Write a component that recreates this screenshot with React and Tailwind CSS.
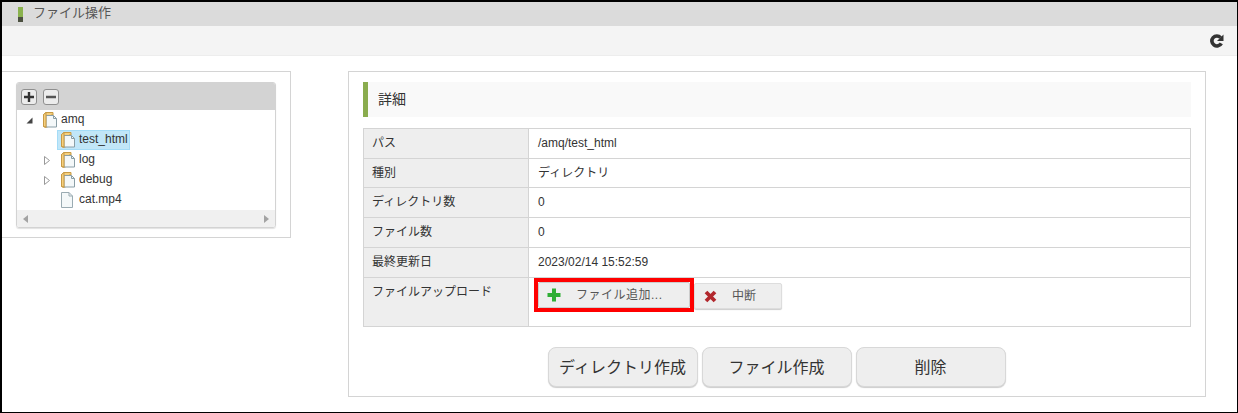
const FONT = 'font-["Liberation_Sans","Noto_Sans_CJK_JP",sans-serif]';

function FolderIcon() {
  return (
    <svg width="14" height="16" viewBox="0 0 14 16" className="shrink-0">
      <path d="M0.5 2.5 L3 0.5 L10 0.5 L10 3 L8 3 L8 13.5 L2.5 15.5 L0.5 14.5 Z" fill="#f5cf7e" stroke="#c79a45" strokeWidth="1" />
      <path d="M3 3.5 L10.5 3.5 L13.5 6.5 L13.5 15 L3 15 Z" fill="#f4f8f9" stroke="#8a9ea6" strokeWidth="1" />
      <path d="M10.5 3.5 L10.5 6.5 L13.5 6.5" fill="none" stroke="#8a9ea6" strokeWidth="1" />
      <path d="M0.5 2.5 L3 0.5 L3 15 L0.5 14.5 Z" fill="#f5cf7e" stroke="#c79a45" strokeWidth="1" />
    </svg>
  );
}

function FileIcon() {
  return (
    <svg width="14" height="16" viewBox="0 0 14 16" className="shrink-0">
      <path d="M0.5 0.5 L8 0.5 L11.5 4 L11.5 15.5 L0.5 15.5 Z" fill="#f4f8f9" stroke="#9aabb2" strokeWidth="1" />
      <path d="M8 0.5 L8 4 L11.5 4" fill="none" stroke="#9aabb2" strokeWidth="1" />
    </svg>
  );
}

function TreeRow({ arrow, selected, file, label, indent }) {
  return (
    <div className={`flex h-5 items-center ${indent ? 'pl-[23px]' : 'pl-[5px]'}`}>
      <span className="flex w-[14px] shrink-0 justify-center">
        {arrow === 'open' && (
          <svg width="7" height="7" viewBox="0 0 7 7"><path d="M0.5 6.5 L6.5 6.5 L6.5 0.5 Z" fill="#444" /></svg>
        )}
        {arrow === 'closed' && (
          <svg width="6" height="9" viewBox="0 0 6 9"><path d="M0.5 0.5 L5.5 4.5 L0.5 8.5 Z" fill="#fff" stroke="#999" /></svg>
        )}
      </span>
      <span className={`ml-[3px] flex h-5 items-center gap-1 pl-1 pr-[2px] ${selected ? 'outline outline-1 -outline-offset-1 outline-[#a5dcf7] bg-[#c1e6f8]' : ''}`}>
        {file ? <FileIcon /> : <FolderIcon />}
        <span className="pb-[2px] text-xs text-[#333]">{label}</span>
      </span>
    </div>
  );
}

function Row({ label, value, className, tall }) {
  return (
    <div className={`flex border-b border-[#d4d4d4] last:border-b-0 ${className}`}>
      <div className={`flex w-[165px] shrink-0 border-r border-[#d4d4d4] bg-[#eeeeee] pl-2 text-xs text-[#333] ${tall ? 'items-start pt-[6px]' : 'items-center pb-[1px]'}`}>
        {label}
      </div>
      <div className={`flex min-w-0 flex-1 items-center pl-[9px] text-xs text-[#333] ${tall ? '' : 'pb-[1px]'}`}>{value}</div>
    </div>
  );
}

function BigButton({ children }) {
  return (
    <button
      type="button"
      className="h-10 w-[150px] rounded-[8px] border border-[#d8d8d8] bg-[#eeeeee] pt-[1px] text-base text-[#333] shadow-[0_1px_1px_rgba(0,0,0,0.2)]"
    >
      {children}
    </button>
  );
}

function TreeToolButton({ children }) {
  return (
    <button type="button" className="flex h-4 w-4 items-center justify-center rounded-[3px] border border-[#8f8f8f] bg-[#ececec]">
      {children}
    </button>
  );
}

export default function App() {
  return (
    <div className={`h-[413px] w-[1238px] overflow-hidden border-b border-l-2 border-r border-t-2 border-black bg-white ${FONT}`}>
      <div className="flex h-6 items-center bg-[#dbdbdb] pl-4">
        <span className="flex h-[15px] w-[5px] flex-col">
          <span className="h-[10px] bg-[#8ab24e]" />
          <span className="h-[5px] bg-[#4b5040]" />
        </span>
        <span className="ml-[10px] pb-[2px] text-[13px] text-[#555]">ファイル操作</span>
      </div>

      <div className="flex h-[30px] items-center justify-end border-b border-[#ededed] bg-[#f4f4f4] pr-[13px]">
        <svg width="14" height="14" viewBox="0 0 14 14">
          <path d="M11.3 9.3 A5 5 0 1 1 10.6 3.6" fill="none" stroke="#333" strokeWidth="3.6" />
          <path d="M13.5 0.5 L13.5 7 L7 7 Z" fill="#333" />
        </svg>
      </div>

      <div className="flex items-start pt-[15px]">
        <div className="h-[167px] w-[289px] border-y border-r border-[#d4d4d4] pl-[14px] pt-[10px]">
          <div className="h-[146px] w-[260px] overflow-hidden rounded-[3px] border border-[#d3d3d3] shadow-[0_1px_1px_rgba(0,0,0,0.12)]">
            <div className="flex h-[27px] items-center gap-[6px] bg-[#d3d3d3] pl-1">
              <TreeToolButton>
                <svg width="12" height="12" viewBox="0 0 12 12"><path d="M6 1 V11 M1 6 H11" stroke="#333" strokeWidth="2.4" /></svg>
              </TreeToolButton>
              <TreeToolButton>
                <svg width="12" height="12" viewBox="0 0 12 12"><path d="M1 6 H11" stroke="#555" strokeWidth="2.4" /></svg>
              </TreeToolButton>
            </div>
            <div className="bg-white">
              <TreeRow arrow="open" label="amq" />
              <TreeRow selected indent label="test_html" />
              <TreeRow arrow="closed" indent label="log" />
              <TreeRow arrow="closed" indent label="debug" />
              <TreeRow file indent label="cat.mp4" />
            </div>
            <div className="flex h-[17px] items-center justify-between bg-[#f0f0f0] px-[6px]">
              <svg width="5" height="8" viewBox="0 0 5 8"><path d="M5 0 L0 4 L5 8 Z" fill="#a3a3a3" /></svg>
              <svg width="5" height="8" viewBox="0 0 5 8"><path d="M0 0 L5 4 L0 8 Z" fill="#a3a3a3" /></svg>
            </div>
          </div>
        </div>

        <div className="ml-[57px] h-[326px] w-[858px] border border-[#d4d4d4] px-[14px] pt-[10px]">
          <div className="flex h-[35px] w-[828px] items-center border-l-[5px] border-[#8aac4e] bg-[#f9f9f9] pb-[2px] pl-[10px] text-sm text-[#333]">
            詳細
          </div>
          <div className="mt-[11px] w-[828px] border border-[#d4d4d4]">
            <Row className="h-[30px]" label="パス" value="/amq/test_html" />
            <Row className="h-[29px]" label="種別" value="ディレクトリ" />
            <Row className="h-[30px]" label="ディレクトリ数" value="0" />
            <Row className="h-[30px]" label="ファイル数" value="0" />
            <Row className="h-[30px]" label="最終更新日" value="2023/02/14 15:52:59" />
            <Row
              tall
              className="h-[48px]"
              label="ファイルアップロード"
              value={
                <div className="-ml-1 -mt-[14px] flex items-center">
                  <div className="border-4 border-[#ff0000]">
                    <button type="button" className="flex h-[26px] w-[152px] items-center rounded-[2px] border border-[#cccccc] bg-[#eeeeee] pl-2 text-xs tracking-[0.5px] text-[#555]">
                      <svg width="14" height="14" viewBox="0 0 14 14" className="shrink-0">
                        <path d="M7 0.5 V13.5 M0.5 7 H13.5" stroke="#2fae35" strokeWidth="4" />
                      </svg>
                      <span className="ml-[15px]">ファイル追加...</span>
                    </button>
                  </div>
                  <button type="button" className="mt-[2px] flex h-[26px] w-[88px] items-center rounded-[2px] border border-[#dddddd] bg-[#eeeeee] pl-[9px] text-xs text-[#555] shadow-[0_1px_1px_rgba(0,0,0,0.2)]">
                    <svg width="13" height="13" viewBox="0 0 13 13" className="shrink-0">
                      <path d="M2 2 L11 11 M11 2 L2 11" stroke="#b2282d" strokeWidth="3.8" />
                    </svg>
                    <span className="ml-[15px]">中断</span>
                  </button>
                </div>
              }
            />
          </div>
          <div className="mt-5 flex justify-center gap-1 pr-[1px]">
            <BigButton>ディレクトリ作成</BigButton>
            <BigButton>ファイル作成</BigButton>
            <BigButton>削除</BigButton>
          </div>
        </div>
      </div>
    </div>
  );
}
